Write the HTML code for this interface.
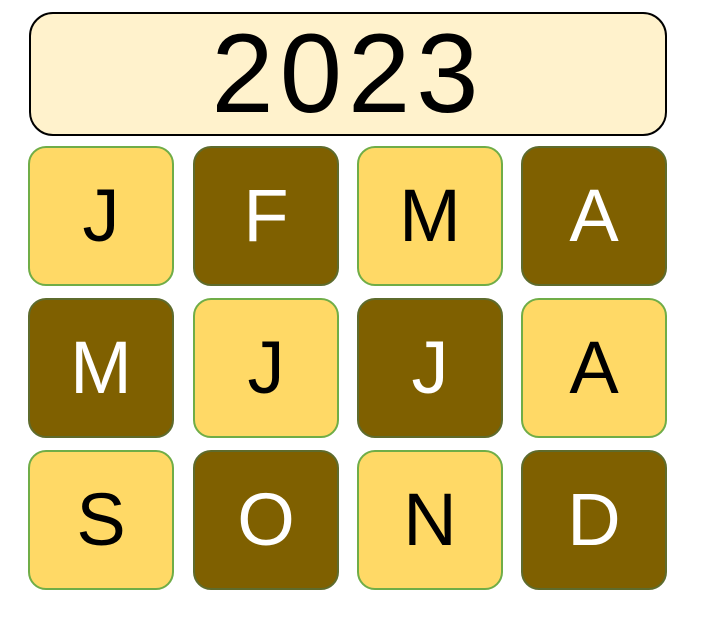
<!DOCTYPE html>
<html><head><style>
body{margin:0;width:706px;height:626px;background:#fff;position:relative;overflow:hidden;font-family:"Liberation Sans",sans-serif}
.t{position:absolute;left:29px;top:12px;width:634px;height:120px;border:2px solid #000;border-radius:24px;background:#FFF2CC;text-align:center;line-height:120px;font-size:112px;letter-spacing:6px}
.c{position:absolute;width:142px;height:136px;border:2.5px solid #70AD47;border-radius:18px;text-align:center;line-height:136px;font-size:74px;box-sizing:content-box}
.l{background:#FFD966;color:#000}
.d{background:#7F6000;color:#fff;border-color:#5E6B2C}
</style></head><body>
<div class="t">2023</div>
<div class="c l" style="left:28px;top:146px">J</div>
<div class="c d" style="left:193px;top:146px">F</div>
<div class="c l" style="left:357px;top:146px">M</div>
<div class="c d" style="left:521px;top:146px">A</div>
<div class="c d" style="left:28px;top:298px">M</div>
<div class="c l" style="left:193px;top:298px">J</div>
<div class="c d" style="left:357px;top:298px">J</div>
<div class="c l" style="left:521px;top:298px">A</div>
<div class="c l" style="left:28px;top:450px">S</div>
<div class="c d" style="left:193px;top:450px">O</div>
<div class="c l" style="left:357px;top:450px">N</div>
<div class="c d" style="left:521px;top:450px">D</div>
</body></html>
